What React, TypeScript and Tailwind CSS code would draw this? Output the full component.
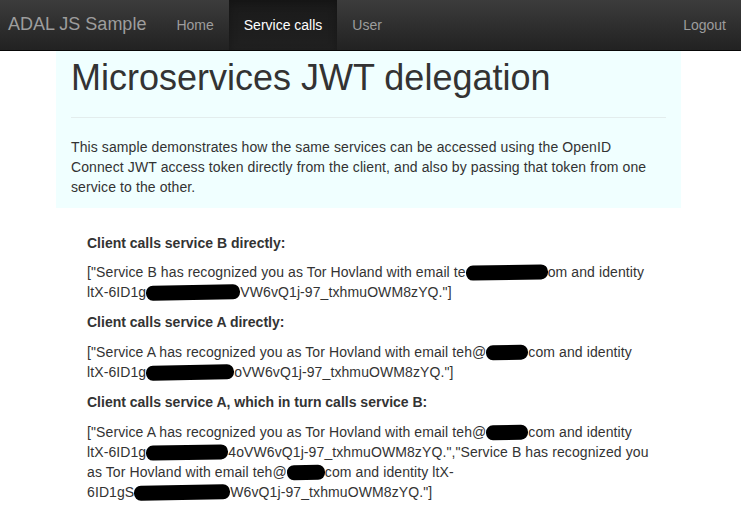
import React from "react";

// black marker scribble over private bits of text
const Blob = ({ w }: { w: number }) => (
  <span
    className="inline-block h-[15px] bg-black rounded-[7px] align-[-3px] -rotate-1"
    style={{ width: w }}
  />
);

const NavLink = ({ label, active }: { label: string; active?: boolean }) => (
  <a
    className={
      active
        ? "block px-[15px] h-[50px] leading-[50px] text-white bg-gradient-to-b from-[#1a1a1a] to-[#202020] shadow-[inset_0_3px_9px_rgba(0,0,0,0.25)]"
        : "block px-[15px] h-[50px] leading-[50px] text-[#9d9d9d]"
    }
  >
    {label}
  </a>
);

export default function App() {
  return (
    <div className="min-h-[520px] bg-white font-['Liberation_Sans',Arial,sans-serif] text-[14px] leading-[20px] text-[#333]">
      {/* navbar */}
      <div className="flex items-center h-[51px] bg-gradient-to-b from-[#3c3c3c] to-[#222] border-b border-[#080808]">
        <a className="pl-[8px] pr-[15px] h-[50px] leading-[49px] text-[18px] text-[#9d9d9d]">
          ADAL JS Sample
        </a>
        <NavLink label="Home" />
        <NavLink label="Service calls" active />
        <NavLink label="User" />
        <div className="ml-auto">
          <NavLink label="Logout" />
        </div>
      </div>

      <div className="ml-[56px] w-[625px]">
        {/* jumbotron */}
        <div className="bg-[#f0ffff] px-[15px] pt-[7px] pb-[11px]">
          <h1 className="text-[36px] leading-[40px] font-normal">Microservices JWT delegation</h1>
          <hr className="mt-[19px] mb-[19px] border-t border-[#e3eded]" />
          <p className="tracking-[0.1px]">
            This sample demonstrates how the same services can be accessed using the OpenID
            <br />
            Connect JWT access token directly from the client, and also by passing that token from one
            <br />
            service to the other.
          </p>
        </div>

        {/* results */}
        <div className="pl-[31px] pr-[10px] pt-[25px] tracking-[0.1px]">
          <h5 className="font-bold mb-[9px] tracking-normal">Client calls service B directly:</h5>
          <p className="mb-[10px]">
            ["Service B has recognized you as Tor Hovland with email te<Blob w={82} />om and identity
            <br />
            ltX-6ID1g<Blob w={94} />VW6vQ1j-97_txhmuOWM8zYQ."]
          </p>

          <h5 className="font-bold mb-[10px] tracking-normal">Client calls service A directly:</h5>
          <p className="mb-[10px]">
            ["Service A has recognized you as Tor Hovland with email teh@<Blob w={42} />com and identity
            <br />
            ltX-6ID1g<Blob w={88} />oVW6vQ1j-97_txhmuOWM8zYQ."]
          </p>

          <h5 className="font-bold mb-[10px] tracking-normal">Client calls service A, which in turn calls service B:</h5>
          <p>
            ["Service A has recognized you as Tor Hovland with email teh@<Blob w={42} />com and identity
            <br />
            ltX-6ID1g<Blob w={82} />4oVW6vQ1j-97_txhmuOWM8zYQ.","Service B has recognized you
            <br />
            as Tor Hovland with email teh@<Blob w={38} />com and identity ltX-
            <br />
            6ID1gS<Blob w={96} />W6vQ1j-97_txhmuOWM8zYQ."]
          </p>
        </div>
      </div>
    </div>
  );
}
